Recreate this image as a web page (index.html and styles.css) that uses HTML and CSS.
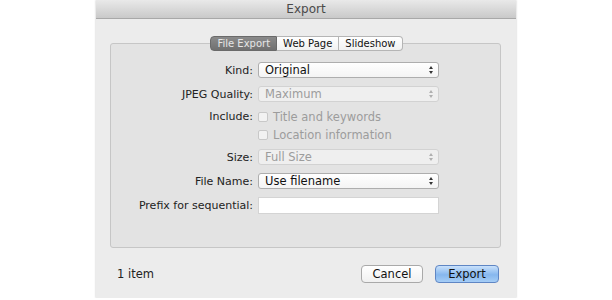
FILE: index.html
```html
<!DOCTYPE html>
<html lang="en">
<head>
    <meta charset="UTF-8">
    <title>Export</title>
    <link rel="stylesheet" href="styles.css">
</head>
<body>
    <div class="window">
        <div class="titlebar">Export</div>
        <div class="content">
            <div class="tabs">
                <span class="tab selected">File Export</span>
                <span class="tab">Web Page</span>
                <span class="tab">Slideshow</span>
            </div>
            <div class="group">
                <div class="form">
                    <label class="label">Kind:</label>
                    <div class="popup">Original<span class="arrows"></span></div>

                    <label class="label">JPEG Quality:</label>
                    <div class="popup disabled">Maximum<span class="arrows"></span></div>

                    <label class="label check-label">Include:</label>
                    <div class="checks">
                        <div class="check"><span class="box"></span>Title and keywords</div>
                        <div class="check"><span class="box"></span>Location information</div>
                    </div>

                    <label class="label">Size:</label>
                    <div class="popup disabled">Full Size<span class="arrows"></span></div>

                    <label class="label">File Name:</label>
                    <div class="popup">Use filename<span class="arrows"></span></div>

                    <label class="label">Prefix for sequential:</label>
                    <div class="textfield"></div>
                </div>
            </div>
            <div class="footer">
                <span class="count">1 item</span>
                <div class="buttons">
                    <button class="button">Cancel</button>
                    <button class="button default">Export</button>
                </div>
            </div>
        </div>
    </div>
</body>
</html>
```

FILE: styles.css
```css
body {
    margin: 0;
    background: #ffffff;
    font-family: "DejaVu Sans", sans-serif;
    font-size: 11px;
    color: #222;
}

.window {
    width: 420px;
    height: 298px;
    margin: 0 auto;
    background: #ececec;
    box-shadow: 0 0 2px rgba(0, 0, 0, 0.25);
}

.titlebar {
    height: 19px;
    line-height: 19px;
    text-align: center;
    font-size: 12px;
    color: #4a4a4a;
    background: linear-gradient(#e9e9e9, #c9c9c9);
    border-bottom: 1px solid #a8a8a8;
    box-sizing: border-box;
}

.content {
    padding: 17px 15px 0 14px;
}

.tabs {
    display: flex;
    justify-content: center;
    position: relative;
    z-index: 1;
    margin-left: 2px;
}

.tab {
    height: 13px;
    line-height: 13px;
    padding: 0 6px;
    background: linear-gradient(#ffffff, #f1f1f1);
    border: 1px solid #b5b5b5;
    border-left: none;
    font-size: 10px;
    color: #111;
}

.tab:first-child {
    border-left: 1px solid #8a8a8a;
    border-radius: 4px 0 0 4px;
}

.tab:last-child {
    border-radius: 0 4px 4px 0;
}

.tab.selected {
    background: linear-gradient(#8a8a8a, #707070);
    border-color: #6a6a6a;
    color: #e6e6e6;
}

.group {
    margin-top: -8px;
    height: 205px;
    box-sizing: border-box;
    background: #e3e3e3;
    border: 1px solid #c6c6c6;
    border-radius: 3px;
    padding: 18px 60px 0 0;
}

.form {
    display: grid;
    grid-template-columns: 142px 181px;
    column-gap: 5px;
    row-gap: 8px;
    align-items: center;
}

.label {
    text-align: right;
    color: #222;
}

.check-label {
    align-self: start;
}

.popup {
    position: relative;
    height: 14px;
    line-height: 14px;
    padding-left: 6px;
    background: linear-gradient(#ffffff, #f4f4f4);
    border: 1px solid #aeaeae;
    border-radius: 3px;
    font-size: 11.5px;
    color: #111;
}

.popup.disabled {
    background: #efefef;
    border-color: #d2d2d2;
    color: #9c9c9c;
}

.arrows {
    position: absolute;
    right: 6px;
    top: 3px;
    width: 0;
    height: 0;
}

.arrows::before,
.arrows::after {
    content: "";
    position: absolute;
    left: -3px;
    border-left: 2.5px solid transparent;
    border-right: 2.5px solid transparent;
}

.arrows::before {
    top: 0;
    border-bottom: 3px solid #333;
}

.arrows::after {
    top: 5px;
    border-top: 3px solid #333;
}

.disabled .arrows::before {
    border-bottom-color: #b0b0b0;
}

.disabled .arrows::after {
    border-top-color: #b0b0b0;
}

.checks {
    display: flex;
    flex-direction: column;
    gap: 5px;
}

.check {
    display: flex;
    align-items: center;
    gap: 5px;
    height: 13px;
    color: #9c9c9c;
    font-size: 11.5px;
}

.box {
    width: 10px;
    height: 10px;
    box-sizing: border-box;
    border: 1px solid #c8c8c8;
    border-radius: 2px;
    background: #f2f2f2;
}

.textfield {
    height: 17px;
    box-sizing: border-box;
    background: #ffffff;
    border: 1px solid #d4d4d4;
}

.footer {
    display: flex;
    justify-content: space-between;
    align-items: center;
    padding: 17px 2px 0 7px;
}

.count {
    font-size: 11.5px;
    color: #222;
}

.buttons {
    display: flex;
    gap: 12px;
}

.button {
    width: 62px;
    height: 18px;
    padding: 0;
    font-family: "DejaVu Sans", sans-serif;
    font-size: 11.5px;
    color: #111;
    background: linear-gradient(#ffffff, #f0f0f0);
    border: 1px solid #a9a9a9;
    border-radius: 4px;
}

.button.default {
    width: 64px;
    background: linear-gradient(#c9e1fb, #86b7ee 55%, #a5cdf6);
    border-color: #5f86c4;
}
```
